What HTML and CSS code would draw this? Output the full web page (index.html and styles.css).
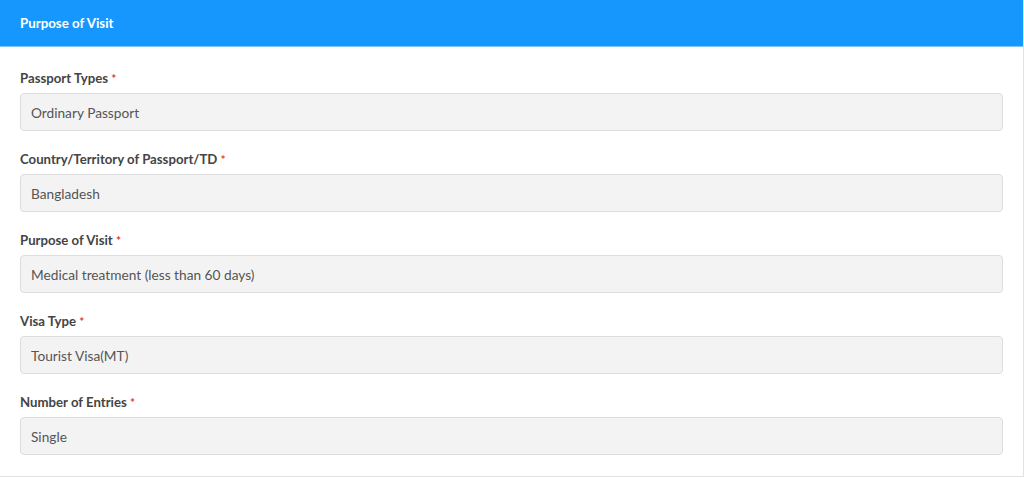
FILE: index.html
```html
<!DOCTYPE html>
<html>
<head>
<meta charset="utf-8">
<link rel="stylesheet" href="styles.css">
</head>
<body>
<div class="card">
  <div class="card-header">Purpose of Visit</div>
  <div class="card-body">
    <div class="group">
      <div class="label">Passport Types <span class="req">*</span></div>
      <div class="field">Ordinary Passport</div>
    </div>
    <div class="group">
      <div class="label">Country/Territory of Passport/TD <span class="req">*</span></div>
      <div class="field">Bangladesh</div>
    </div>
    <div class="group">
      <div class="label">Purpose of Visit <span class="req">*</span></div>
      <div class="field">Medical treatment (less than 60 days)</div>
    </div>
    <div class="group">
      <div class="label">Visa Type <span class="req">*</span></div>
      <div class="field">Tourist Visa(MT)</div>
    </div>
    <div class="group">
      <div class="label">Number of Entries <span class="req">*</span></div>
      <div class="field">Single</div>
    </div>
  </div>
</div>
</body>
</html>
```
FILE: styles.css
```css
html, body { margin: 0; padding: 0; background: #fff; }
body { font-family: "Lato", "Open Sans", sans-serif; }
.card {
  width: 1024px;
  box-sizing: border-box;
  border-right: 1px solid #e3e3e3;
  border-bottom: 1px solid #e3e3e3;
}
.card-header {
  height: 47px;
  box-sizing: border-box;
  background: #1597fd;
  color: #fff;
  font-size: 13.3px;
  font-weight: 700;
  padding: 0 20px;
  display: flex;
  align-items: center;
  border-bottom: 1px solid #7cc2fb;
}
.card-body { padding: 22px 20px 21px 20px; }
.group { margin-bottom: 19px; }
.group:last-child { margin-bottom: 0; }
.label {
  font-size: 13.2px;
  font-weight: 700;
  color: #444;
  line-height: 19px;
  margin-bottom: 5px;
}
.req { color: #e53935; font-size: 12px; }
.field {
  height: 38px;
  box-sizing: border-box;
  background: #f3f3f3;
  border: 1px solid #ddd;
  border-radius: 4px;
  padding: 0 10px;
  display: flex;
  align-items: center;
  font-size: 13.7px;
  color: #555;
}
```
